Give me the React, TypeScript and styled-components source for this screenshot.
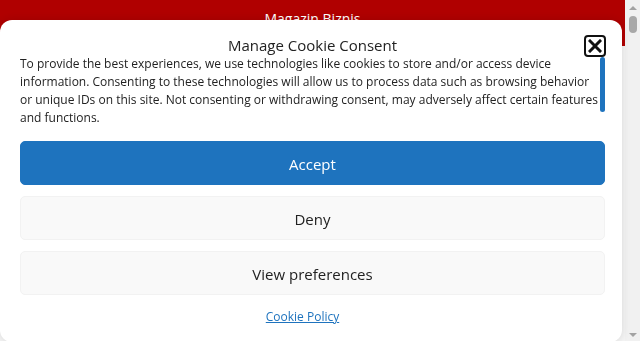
import React from "react";
import styled, { createGlobalStyle } from "styled-components";

const Global = createGlobalStyle`
  html, body { margin: 0; padding: 0; }
  body { font-family: "Open Sans", "Liberation Sans", sans-serif; background: #fff; overflow: hidden; }
`;

const Page = styled.div`
  display: flex;
  width: 640px;
  height: 341px;
  overflow: hidden;
`;

const Main = styled.div`
  flex: 1;
  display: flex;
  flex-direction: column;
  background: #f4f4f4;
`;

const Header = styled.header`
  height: 46px;
  background: #b00000;
  color: #fff;
  font-size: 14px;
  display: flex;
  justify-content: center;
  padding-top: 9px;
  box-sizing: border-box;
`;

const ScrollTrack = styled.div`
  width: 15px;
  background: #f1f1f1;
  display: flex;
  flex-direction: column;
  align-items: center;
`;

const Arrow = styled.div<{ $down?: boolean }>`
  width: 0;
  height: 0;
  border-left: 4px solid transparent;
  border-right: 4px solid transparent;
  ${(p) => (p.$down ? "border-top: 4px solid #a3a3a3;" : "border-bottom: 4px solid #a3a3a3;")}
  margin: ${(p) => (p.$down ? "auto 0 4px" : "6px 0 0")};
`;

const Thumb = styled.div`
  width: 8px;
  height: 17px;
  margin-top: 6px;
  border-radius: 4px;
  background: #a8a8a8;
`;

const Modal = styled.div`
  position: fixed;
  left: 0;
  top: 20px;
  width: 622px;
  height: 322px;
  background: #fff;
  border-radius: 12px;
  box-shadow: 0 0 8px rgba(0, 0, 0, 0.12);
  padding: 14px 17px 0 20px;
  box-sizing: border-box;
  display: flex;
  flex-direction: column;
`;

const ModalHead = styled.div`
  display: flex;
  align-items: center;
  justify-content: center;
  position: relative;
  height: 22px;
`;

const Title = styled.div`
  font-size: 15px;
  color: #222;
`;

const Close = styled.button`
  position: absolute;
  right: -1px;
  top: 1px;
  width: 22px;
  height: 22px;
  padding: 0;
  border: 2px solid #111;
  border-radius: 4px;
  background: #fff;
  display: flex;
  align-items: center;
  justify-content: center;
  box-sizing: border-box;
`;

const MessageRow = styled.div`
  display: flex;
  gap: 1px;
  margin-top: -1px;
  height: 67px;
  width: 585px;
`;

const Message = styled.div`
  flex: 1;
  overflow: hidden;
  font-size: 12px;
  line-height: 18px;
  color: #222;
`;

const MsgScroll = styled.div`
  width: 5px;
  display: flex;
  flex-direction: column;
  padding-top: 2px;
`;

const MsgThumb = styled.div`
  height: 55px;
  border-radius: 3px;
  background: #1e73be;
`;

const Buttons = styled.div`
  display: flex;
  flex-direction: column;
  gap: 11px;
  margin-top: 19px;
  width: 585px;
`;

const Btn = styled.button<{ $primary?: boolean }>`
  height: 44px;
  padding-top: 2px;
  border-radius: 5px;
  font-family: inherit;
  font-size: 15px;
  border: 1px solid ${(p) => (p.$primary ? "#1e73be" : "#f2f2f2")};
  background: ${(p) => (p.$primary ? "#1e73be" : "#f9f9f9")};
  color: ${(p) => (p.$primary ? "#fff" : "#222")};
`;

const Links = styled.div`
  display: flex;
  justify-content: center;
  margin-top: 13px;
  width: 565px;
`;

const PolicyLink = styled.a`
  font-size: 12px;
  color: #1e73be;
  text-decoration: underline;
`;

export default function App() {
  return (
    <>
      <Global />
      <Page>
        <Main>
          <Header>Magazin Biznis</Header>
        </Main>
        <ScrollTrack>
          <Arrow />
          <Thumb />
          <Arrow $down />
        </ScrollTrack>
      </Page>
      <Modal>
        <ModalHead>
          <Title>Manage Cookie Consent</Title>
          <Close aria-label="close">
            <svg width="14" height="14" viewBox="0 0 14 14">
              <path d="M2 2 L12 12 M12 2 L2 12" stroke="#111" strokeWidth="3" strokeLinecap="square" />
            </svg>
          </Close>
        </ModalHead>
        <MessageRow>
          <Message>
            To provide the best experiences, we use technologies like cookies to store and/or access device
            information. Consenting to these technologies will allow us to process data such as browsing behavior
            or unique IDs on this site. Not consenting or withdrawing consent, may adversely affect certain features
            and functions.
          </Message>
          <MsgScroll>
            <MsgThumb />
          </MsgScroll>
        </MessageRow>
        <Buttons>
          <Btn $primary>Accept</Btn>
          <Btn>Deny</Btn>
          <Btn>View preferences</Btn>
        </Buttons>
        <Links>
          <PolicyLink href="#">Cookie Policy</PolicyLink>
        </Links>
      </Modal>
    </>
  );
}
